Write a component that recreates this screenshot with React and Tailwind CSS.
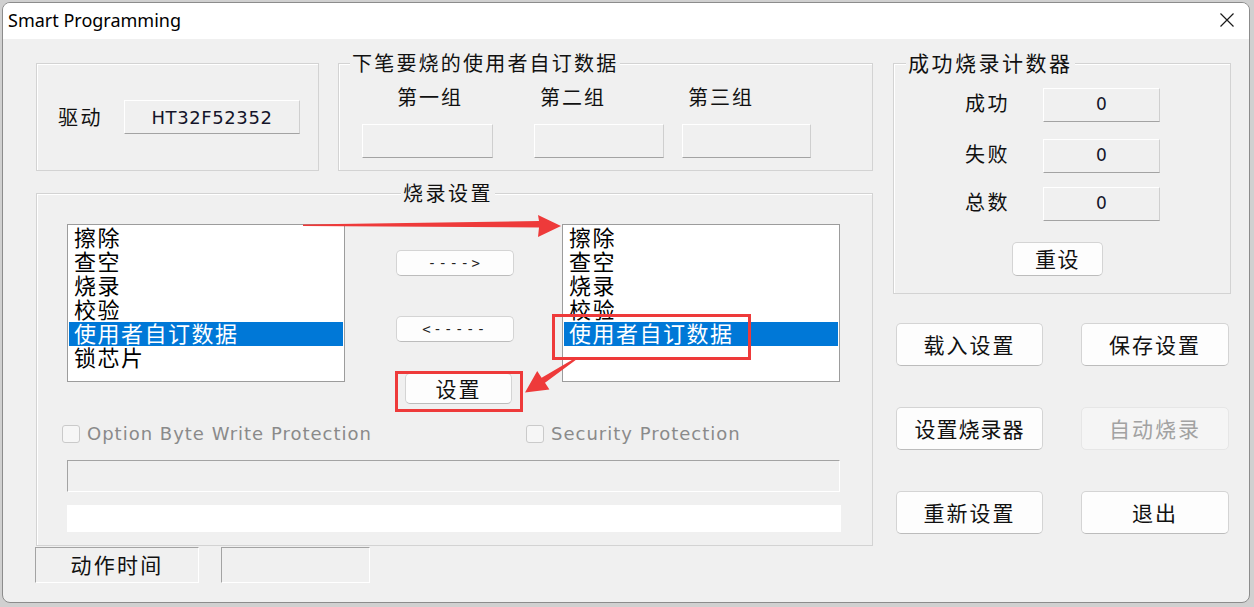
import React from "react";

const groupBox = "relative border border-[#d3d3d3] shadow-[inset_1px_1px_0_#ffffff]";
const legendBase = "absolute bg-[#f0f0f0] px-[2px] leading-[26px] h-[26px] whitespace-nowrap text-[#111]";
const raised = "border border-t-white border-l-white border-r-[#cfcfcf] border-b-[#a3a3a3] bg-[#f0f0f0]";
const sunken = "border border-t-[#a3a3a3] border-l-[#a3a3a3] border-r-white border-b-white bg-[#f0f0f0]";
const w11btn = "shrink-0 flex items-center justify-center rounded-[5px] border border-[#d4d4d4] border-b-[#bcbcbc] bg-[#fdfdfd] text-[#111]";

function ListBox({ items, selected }) {
  return (
    <div className="w-[278px] h-full border border-[#9c9c9c] bg-white p-[1px] overflow-hidden">
      {items.map((t, i) => (
        <div
          key={i}
          className={
            "h-[24px] leading-[21px] pl-[5px] text-[22px] tracking-[1.5px] whitespace-nowrap " +
            (i === selected ? "bg-[#0078d7] text-white" : "text-black")
          }
        >
          {t}
        </div>
      ))}
    </div>
  );
}

function Check({ label }) {
  return (
    <div className="flex items-center gap-[7px]">
      <div className="w-[18px] h-[18px] rounded-[3px] border border-[#cacaca] bg-[#f6f6f6]" />
      <span className="font-['DejaVu_Sans',sans-serif] text-[18px] tracking-[1px] text-[#8a8a8a] leading-[18px]">{label}</span>
    </div>
  );
}

export default function App() {
  return (
    <div className="relative w-[1254px] h-[607px] overflow-hidden bg-[#d0d0d0] pt-[2px] pl-[2px] font-['Noto_Sans_CJK_SC','DejaVu_Sans',sans-serif]">
      <div className="w-[1248px] h-[601px] rounded-[8px] border border-[#8c8c8c] overflow-hidden bg-[#f0f0f0] flex flex-col">
        {/* title bar */}
        <div className="h-[36px] shrink-0 bg-white flex items-center justify-between pl-[5px] pr-[15px]">
          <span className="font-['Noto_Sans',sans-serif] text-[18px] text-black leading-none mb-[3px]">Smart Programming</span>
          <svg width="14" height="14" viewBox="0 0 14 14" className="mb-[3px]">
            <path d="M0.5 0.5L13.5 13.5M13.5 0.5L0.5 13.5" stroke="#1a1a1a" strokeWidth="1.2" fill="none" />
          </svg>
        </div>

        {/* body */}
        <div className="flex pl-[33px] pt-[24px]">
          {/* left column */}
          <div className="w-[837px] flex flex-col">
            <div className="flex h-[108px]">
              {/* driver */}
              <div className={groupBox + " w-[283px] h-full flex items-center pl-[21px] gap-[21px]"}>
                <span className="text-[20px] tracking-[2.5px] leading-none text-[#111]">驱动</span>
                <div className={raised + " w-[176px] h-[34px] flex items-center justify-center font-['DejaVu_Sans',sans-serif] text-[18px] tracking-[0.6px] text-[#14142a]"}>
                  HT32F52352
                </div>
              </div>
              {/* user data */}
              <div className={groupBox + " w-[535px] ml-[19px] h-full flex flex-col pt-[21px]"}>
                <span className={legendBase + " top-[-14px] left-[11px] text-[20px] tracking-[2.2px]"}>下笔要烧的使用者自订数据</span>
                <div className="flex h-[24px] items-center text-[20px] tracking-[2px] leading-none text-[#111]">
                  <span className="ml-[58px] w-[66px]">第一组</span>
                  <span className="ml-[77px] w-[66px]">第二组</span>
                  <span className="ml-[82px] w-[66px]">第三组</span>
                </div>
                <div className="flex mt-[15px]">
                  <div className={raised + " ml-[23px] w-[131px] h-[34px]"} />
                  <div className={raised + " ml-[41px] w-[130px] h-[34px]"} />
                  <div className={raised + " ml-[18px] w-[129px] h-[34px]"} />
                </div>
              </div>
            </div>

            {/* burn settings */}
            <div className={groupBox + " mt-[22px] h-[353px] w-full pt-[30px] pl-[30px] flex flex-col"}>
              <span className={legendBase + " top-[-14px] left-[364px] text-[20px] tracking-[2.5px]"}>烧录设置</span>
              <div className="flex h-[158px] shrink-0">
                <ListBox items={["擦除", "查空", "烧录", "校验", "使用者自订数据", "锁芯片"]} selected={4} />
                <div className="ml-[51px] w-[118px] flex flex-col">
                  <div className={w11btn + " mt-[26px] h-[26px] rounded-[4px] font-['DejaVu_Sans_Mono',monospace] text-[14px] tracking-[2.5px] text-[#222]"}>----&gt;</div>
                  <div className={w11btn + " mt-[40px] h-[26px] rounded-[4px] font-['DejaVu_Sans_Mono',monospace] text-[14px] tracking-[2.5px] text-[#222]"}>&lt;-----</div>
                  <div className={w11btn + " mt-[31px] ml-[9px] w-[107px] h-[31px] rounded-[4px] text-[21px] tracking-[2px]"}>设置</div>
                </div>
                <div className="ml-[48px] h-full">
                  <ListBox items={["擦除", "查空", "烧录", "校验", "使用者自订数据"]} selected={4} />
                </div>
              </div>
              <div className="flex items-center mt-[43px] ml-[-5px] h-[18px] shrink-0">
                <div className="w-[464px]">
                  <Check label="Option Byte Write Protection" />
                </div>
                <Check label="Security Protection" />
              </div>
              <div className={sunken + " shrink-0 mt-[17px] w-[773px] h-[32px]"} />
              <div className="shrink-0 mt-[13px] w-[774px] h-[27px] bg-white" />
            </div>

            {/* bottom */}
            <div className="flex mt-[1px] ml-[-1px]">
              <div className={sunken + " w-[164px] h-[36px] flex items-center justify-center text-[21px] tracking-[2.2px] text-[#111]"}>动作时间</div>
              <div className={sunken + " ml-[22px] w-[149px] h-[36px]"} />
            </div>
          </div>

          {/* right column */}
          <div className="ml-[20px] w-[338px] flex flex-col">
            <div className={groupBox + " h-[231px] w-full pt-[24px] flex flex-col"}>
              <span className={legendBase + " top-[-15px] left-[12px] text-[21px] tracking-[2.5px]"}>成功烧录计数器</span>
              {[
                ["成功", "mt-0"],
                ["失败", "mt-[17px]"],
                ["总数", "mt-[14px]"],
              ].map(([l, m]) => (
                <div key={l} className={"flex items-center shrink-0 " + m}>
                  <span className="ml-[71px] w-[45px] pb-[5px] text-[20px] tracking-[2.5px] leading-none text-[#111]">{l}</span>
                  <div className={raised + " ml-[33px] w-[117px] h-[34px] flex items-center justify-center font-['DejaVu_Sans',sans-serif] text-[17px] text-[#14142a]"}>0</div>
                </div>
              ))}
              <div className={w11btn + " mt-[21px] ml-[118px] w-[91px] h-[34px] text-[21px] tracking-[1.5px]"}>重设</div>
            </div>

            <div className="mt-[29px] ml-[3px] grid grid-cols-[147px_148px] gap-x-[38px] gap-y-[41px]">
              <div className={w11btn + " h-[43px] text-[21px] tracking-[2px]"}>载入设置</div>
              <div className={w11btn + " h-[43px] text-[21px] tracking-[2px]"}>保存设置</div>
              <div className={w11btn + " h-[43px] text-[21px] tracking-[1px]"}>设置烧录器</div>
              <div className="flex items-center justify-center rounded-[5px] border border-[#e6e6e6] bg-[#f5f5f5] h-[43px] text-[21px] tracking-[2px] text-[#a2a2a2]">自动烧录</div>
              <div className={w11btn + " h-[43px] text-[21px] tracking-[2px]"}>重新设置</div>
              <div className={w11btn + " h-[43px] text-[21px] tracking-[2px]"}>退出</div>
            </div>
          </div>
        </div>
      </div>

      {/* annotations */}
      <svg className="absolute left-0 top-0 pointer-events-none" width="1254" height="607" viewBox="0 0 1254 607">
        <rect x="396.5" y="372.5" width="125" height="38" fill="none" stroke="#ee3a3a" strokeWidth="3" />
        <rect x="553.5" y="315.5" width="196" height="43" fill="none" stroke="#ee3a3a" strokeWidth="3" />
        <polygon points="303,224.5 539,221 538,215 561,226 538,237 539,227.5 303,226" fill="#ee3a3a" />
        <polygon points="576.6,357.3 541.6,377.8 537.2,371.1 525,392.5 549.4,389.5 545,382.8 577.4,358.7" fill="#ee3a3a" />
      </svg>
    </div>
  );
}
